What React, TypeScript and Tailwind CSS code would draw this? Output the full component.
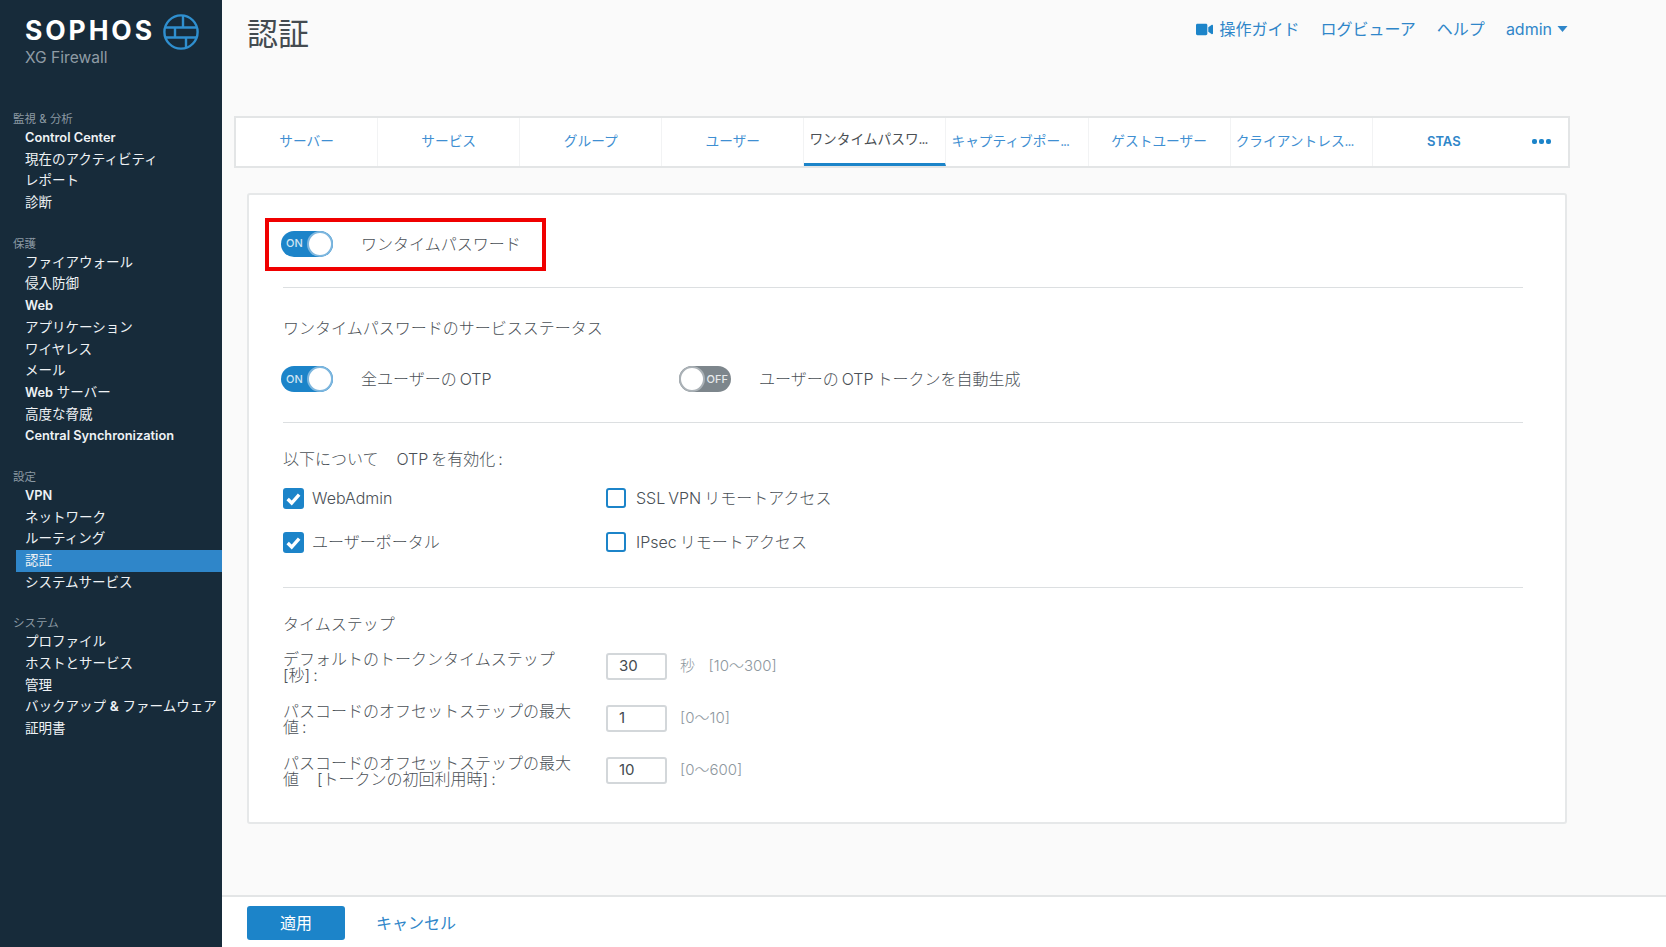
import { FaVideo } from "react-icons/fa";

const font = "font-['Inter','Noto_Sans_CJK_JP',sans-serif]";

const nav = [
  { title: "監視 & 分析", items: ["*Control Center", "現在のアクティビティ", "レポート", "診断"] },
  {
    title: "保護",
    items: ["ファイアウォール", "侵入防御", "*Web", "アプリケーション", "ワイヤレス", "メール", "Web サーバー", "高度な脅威", "*Central Synchronization"],
  },
  { title: "設定", items: ["*VPN", "ネットワーク", "ルーティング", "認証", "システムサービス"] },
  { title: "システム", items: ["プロファイル", "ホストとサービス", "管理", "バックアップ & ファームウェア", "証明書"] },
];

const tabs = ["サーバー", "サービス", "グループ", "ユーザー", "ワンタイムパスワ", "キャプティブポー", "ゲストユーザー", "クライアントレス", "STAS"];
const cutOff = ["ワンタイムパスワ", "キャプティブポー", "クライアントレス"];

const steps = [
  { label: "デフォルトのトークンタイムステップ\n[秒] :", value: "30", hint: "秒 \u00a0\u00a0\u00a0\u00a0[10〜300]", mt: "mt-[17px]" },
  { label: "パスコードのオフセットステップの最大\n値 :", value: "1", hint: "[0〜10]", mt: "mt-[25px]" },
  { label: "パスコードのオフセットステップの最大\n値 \u00a0\u00a0\u00a0\u00a0\u00a0[トークンの初回利用時] :", value: "10", hint: "[0〜600]", mt: "mt-[25px]" },
];

function NavLabel({ text }: { text: string }) {
  if (text.startsWith("*")) return <span className="text-[12.8px] font-semibold">{text.slice(1)}</span>;
  if (text === "Web サーバー")
    return (
      <>
        <span className="text-[12.8px] font-semibold">Web</span> サーバー
      </>
    );
  if (text.includes(" & ")) {
    const [a, b] = text.split(" & ");
    return (
      <>
        {a} <span className="font-semibold">&</span> {b}
      </>
    );
  }
  return <>{text}</>;
}

function Logo() {
  return (
    <div className="h-[111px] pt-[14px] pl-[12px]">
      <div className="flex h-[36px] items-center">
        <span className="mb-[4px] w-[138px] font-['Inter'] text-[26.5px] leading-[30px] font-bold tracking-[2.9px] text-white">SOPHOS</span>
        <svg viewBox="0 0 36 36" className="h-[36px] w-[36px]" fill="none" stroke="#2f8fcf" strokeWidth="2.4">
          <circle cx="18" cy="18" r="16.6" />
          <path d="M3 13.5h30M2.5 23.5h31M12 13.5v10M20 2v11.5M23 23.5V34" />
        </svg>
      </div>
      <div className="-mt-[1px] text-[15.6px] leading-[18px] text-[#8f9ca5]">XG Firewall</div>
    </div>
  );
}

function Sidebar() {
  return (
    <aside className="w-[222px] shrink-0 bg-[#172b3a] pl-[13px]">
      <Logo />
      {nav.map((section) => (
        <div key={section.title} className="mb-[22px]">
          <div className="h-[16px] text-[11.5px] leading-[16px] text-[#8b99a3]">{section.title}</div>
          {section.items.map((item) => (
            <div
              key={item}
              className={`ml-[3px] h-[21.7px] pl-[9px] text-[13.5px] leading-[21.7px] whitespace-nowrap text-[#eef2f5] ${item === "認証" ? "bg-[#2f86c9]" : ""}`}
            >
              <NavLabel text={item} />
            </div>
          ))}
        </div>
      ))}
    </aside>
  );
}

function Toggle({ on }: { on: boolean }) {
  return (
    <div className={`flex h-[26px] w-[52px] items-center rounded-full text-[11px] font-medium ${on ? "bg-[#1c84c9] pl-[5px] text-[#cfe4f3]" : "flex-row-reverse bg-[#7d868c] pr-[3px] text-[#e6e9eb]"}`}>
      <span className="leading-none">{on ? "ON" : "OFF"}</span>
      <span className={`h-[26px] w-[26px] rounded-full border-2 bg-white ${on ? "ml-auto border-[#7db6de]" : "mr-auto border-[#aab1b6]"}`} />
    </div>
  );
}

function Check({ checked }: { checked: boolean }) {
  if (!checked) return <span className="h-[20px] w-[20px] shrink-0 rounded-[3px] border-2 border-[#1c84c9] bg-white" />;
  return (
    <span className="flex h-[21px] w-[21px] shrink-0 items-center justify-center rounded-[3px] bg-[#1c84c9]">
      <svg viewBox="0 0 16 16" className="h-[17px] w-[17px]" fill="none" stroke="white" strokeWidth="3.2">
        <path d="M2.5 8.5l3.8 3.8 7-8" />
      </svg>
    </span>
  );
}

function Divider() {
  return <div className="h-px bg-[#dcdfe1]" />;
}

export default function App() {
  return (
    <div className={`flex h-[947px] w-[1666px] overflow-hidden bg-[#fafafa] ${font} text-[#555d63]`}>
      <Sidebar />
      <main className="flex min-w-0 flex-1 flex-col">
        <div className="flex-1 pl-[12px]">
          <header className="flex h-[116px] items-start pr-[98px]">
            <h1 className="mt-[14px] ml-[13px] text-[31px] leading-[40px] font-normal text-[#444b50]">認証</h1>
            <div className="mt-[18px] ml-auto flex h-[22px] items-center text-[16px] text-[#2f86c9]">
              <FaVideo className="mr-[6px] h-[17px] w-[17px] text-[#1c84c9]" />
              <span>操作ガイド</span>
              <span className="ml-[21px]">ログビューア</span>
              <span className="ml-[21px]">ヘルプ</span>
              <span className="ml-[21px]">admin</span>
              <svg viewBox="0 0 10 6" className="ml-[5px] h-[6px] w-[11px]" fill="#2f86c9">
                <path d="M0 0h10L5 6z" />
              </svg>
            </div>
          </header>

          <div className="flex h-[52px] w-[1336px] border-2 border-[#e3e5e6] bg-white text-[13.7px] text-[#3f8fd2]">
            {tabs.map((tab, i) => (
              <div
                key={tab}
                className={`flex w-[142.1px] items-center pb-[2px] whitespace-nowrap ${cutOff.includes(tab) ? "pl-[5px]" : "justify-center"} ${i < 8 ? "border-r border-[#f2f3f4]" : ""} ${i === 4 ? "border-b-[3px] border-b-[#1c84c9] text-[#4a4f54]" : ""} ${tab === "STAS" ? "pt-[2px] text-[13px] font-semibold text-[#2f86c9]" : ""}`}
              >
                {tab}
                {cutOff.includes(tab) && <span className="tracking-[-1px]">...</span>}
              </div>
            ))}
            <div className="flex flex-1 items-center justify-center gap-[2px] pb-[2px]">
              <span className="h-[5px] w-[5px] rounded-[2px] bg-[#1c84c9]" />
              <span className="h-[5px] w-[5px] rounded-[2px] bg-[#1c84c9]" />
              <span className="h-[5px] w-[5px] rounded-[2px] bg-[#1c84c9]" />
            </div>
          </div>

          <section className="mt-[25px] ml-[13px] h-[631px] w-[1320px] rounded-[3px] border-2 border-[#e6e8e9] bg-white pr-[42px] pl-[34px] text-[16px] font-light text-[#4a5056] [word-spacing:-1.5px]">
            <div className="mt-[23px] mb-[16px] -ml-[18px] flex h-[53px] w-[281px] items-center border-4 border-[#f00000] pb-[2px] pl-[12px]">
              <Toggle on />
              <span className="ml-[28px]">ワンタイムパスワード</span>
            </div>
            <Divider />
            <div className="mt-[28px] h-[24px] leading-[24px]">ワンタイムパスワードのサービスステータス</div>
            <div className="mt-[26px] -ml-[2px] flex h-[26px] items-center">
              <Toggle on />
              <span className="ml-[28px] w-[318px]">全ユーザーの OTP</span>
              <Toggle on={false} />
              <span className="ml-[28px]">ユーザーの OTP トークンを自動生成</span>
            </div>
            <div className="mt-[30px]">
              <Divider />
            </div>
            <div className="mt-[24px] h-[24px] leading-[24px]">以下について &nbsp;&nbsp;&nbsp;&nbsp;&nbsp;OTP を有効化 :</div>
            <div className="mt-[15px] flex h-[24px] items-center">
              <div className="flex w-[323px] items-center gap-[8px]">
                <Check checked />
                <span>WebAdmin</span>
              </div>
              <div className="flex items-center gap-[10px]">
                <Check checked={false} />
                <span>SSL VPN リモートアクセス</span>
              </div>
            </div>
            <div className="mt-[20px] flex h-[24px] items-center">
              <div className="flex w-[323px] items-center gap-[8px]">
                <Check checked />
                <span>ユーザーポータル</span>
              </div>
              <div className="flex items-center gap-[10px]">
                <Check checked={false} />
                <span>IPsec リモートアクセス</span>
              </div>
            </div>
            <div className="mt-[33px]">
              <Divider />
            </div>
            <div className="mt-[24px] h-[24px] leading-[24px]">タイムステップ</div>
            {steps.map((s) => (
              <div key={s.value} className={`${s.mt} flex h-[27px] items-center`}>
                <div className="w-[323px] text-[16px] leading-[16px] whitespace-pre">{s.label}</div>
                <div className="flex h-[27px] w-[61px] items-center rounded-[3px] border-2 border-[#d3d7da] bg-white pl-[11px] text-[15px] font-normal text-[#444b50]">
                  {s.value}
                </div>
                <span className="ml-[13px] text-[15px] text-[#8d979e]">{s.hint}</span>
              </div>
            ))}
          </section>
        </div>

        <footer className="flex h-[52px] items-start border-t-2 border-[#e3e5e6] bg-white pt-[9px] pl-[25px]">
          <div className="flex h-[34px] w-[98px] items-center justify-center rounded-[3px] bg-[#1c84c9] text-[16px] text-white">適用</div>
          <span className="mt-[6px] ml-[31px] text-[16px] leading-[23px] text-[#2f86c9]">キャンセル</span>
        </footer>
      </main>
    </div>
  );
}
